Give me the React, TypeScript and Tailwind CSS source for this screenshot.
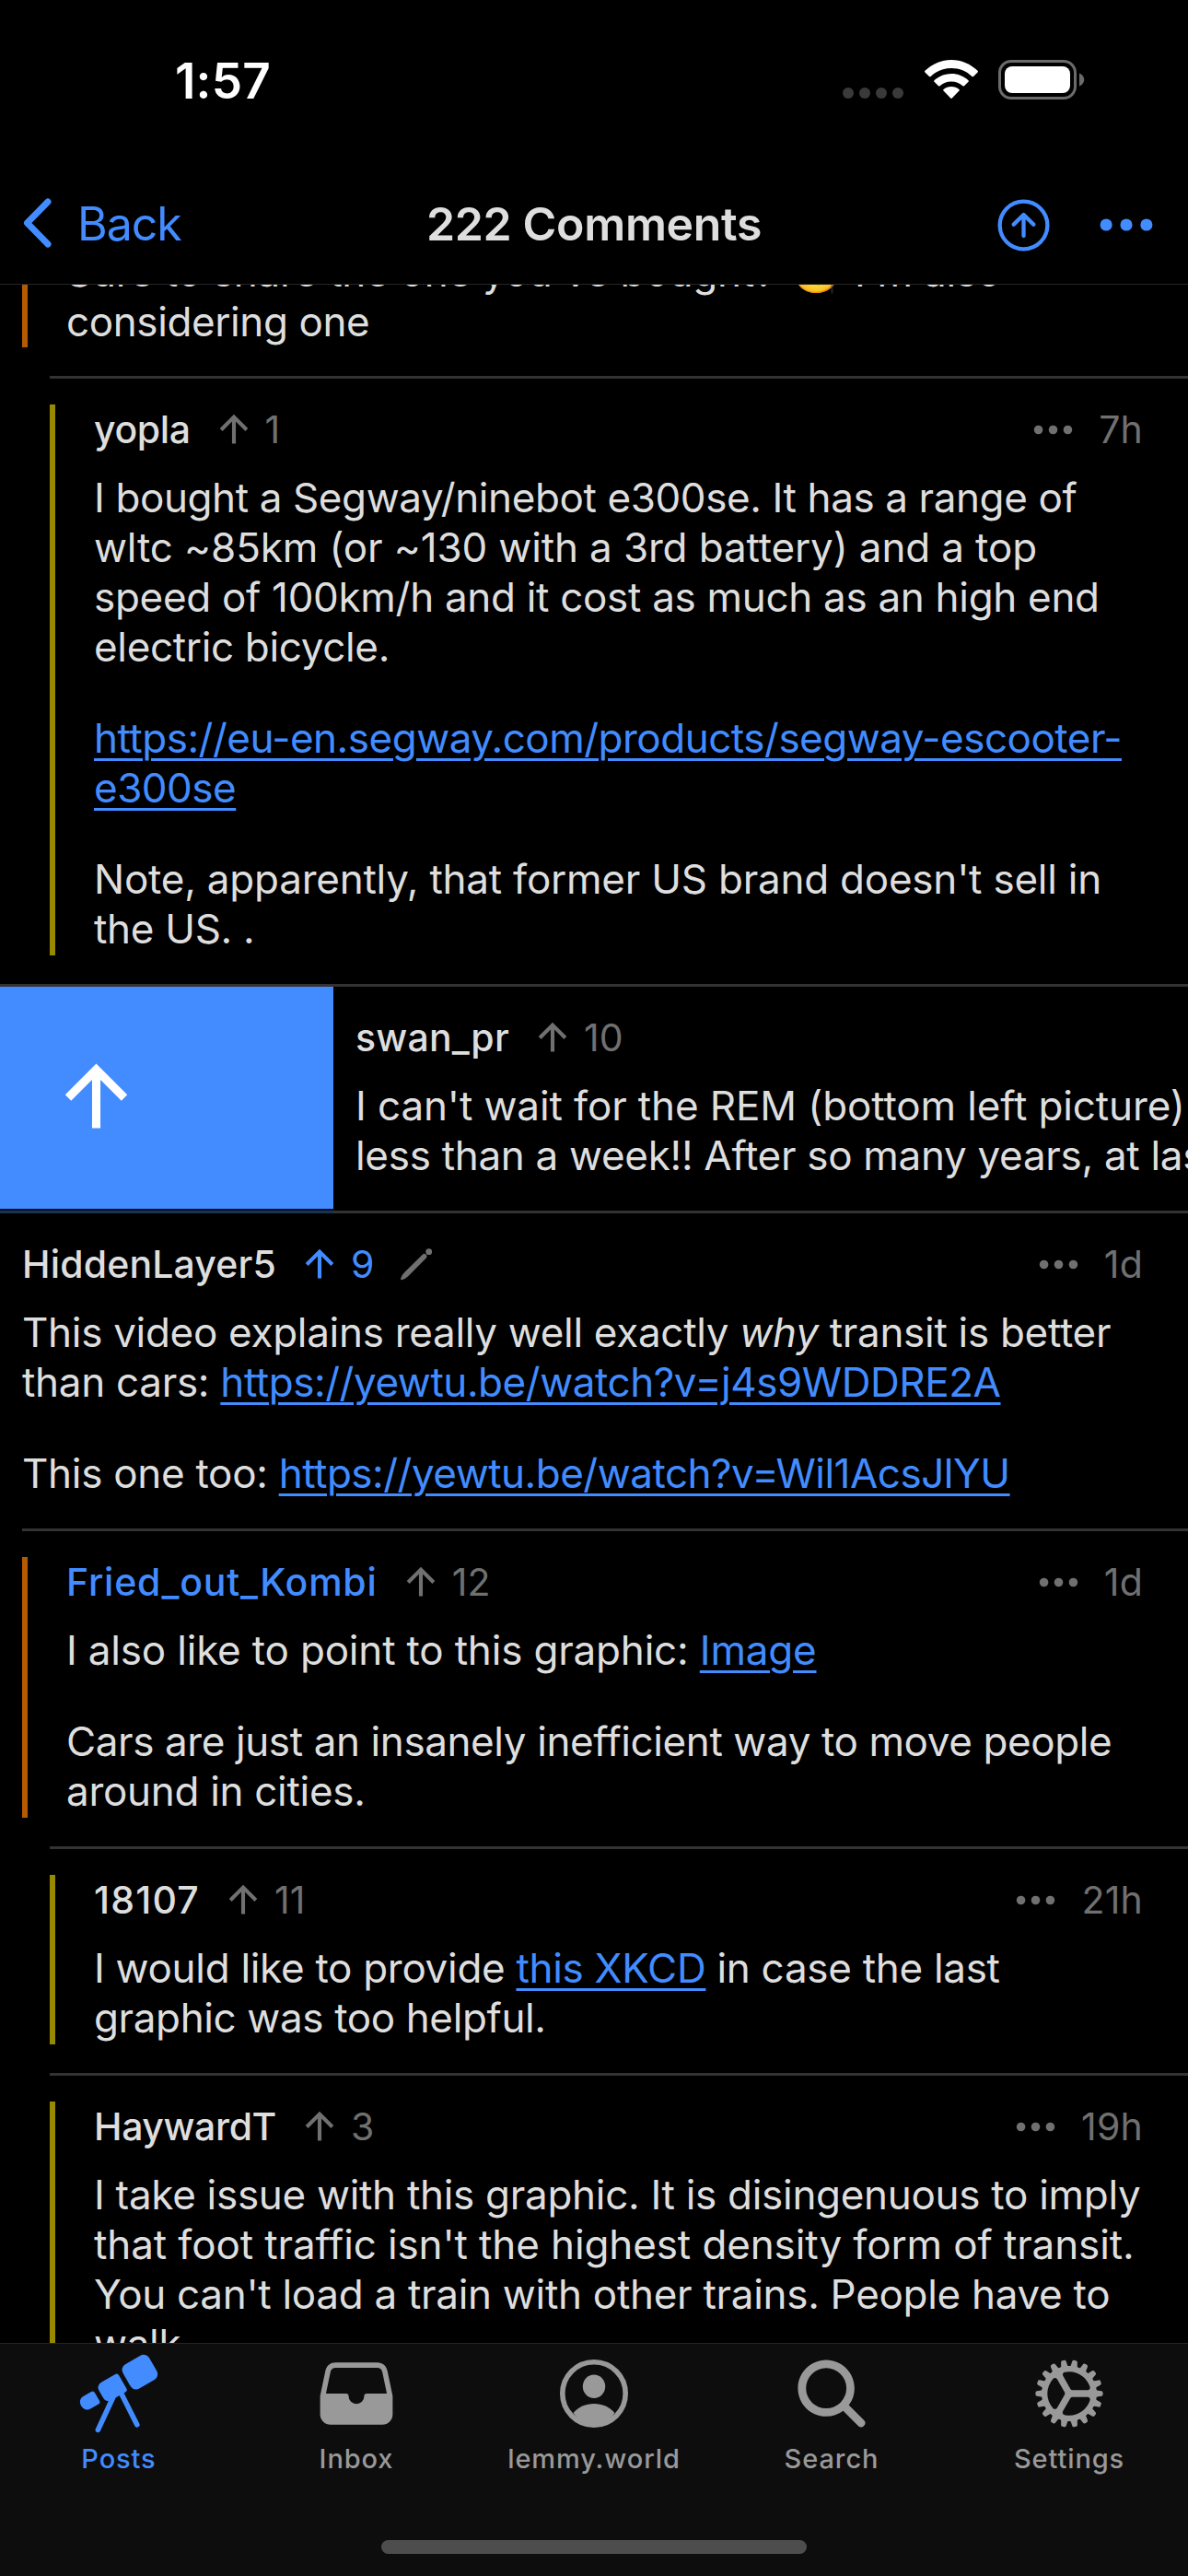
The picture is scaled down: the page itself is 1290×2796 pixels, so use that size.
import { ReactNode } from "react";
import {
  IoArrowUpCircleOutline,
  IoArrowUpSharp,
  IoCog,
  IoEllipsisHorizontal,
  IoFileTray,
  IoSearch,
  IoTelescope,
} from "react-icons/io5";

function StatusBar() {
  return (
    <div className="flex h-[174px] shrink-0 items-start justify-between pl-[190px] pr-[111px] pt-[60px] text-white">
      <div className="text-[53px] font-semibold leading-[56px] tracking-[0.2px]">1:57</div>
      <div className="flex items-start pt-[5px]">
        <div className="mr-[23px] flex gap-[6px] pt-[30px]">
          <i className="h-3 w-3 rounded-full bg-[#3a3a3a]" />
          <i className="h-3 w-3 rounded-full bg-[#3a3a3a]" />
          <i className="h-3 w-3 rounded-full bg-[#3a3a3a]" />
          <i className="h-3 w-3 rounded-full bg-[#3a3a3a]" />
        </div>
        <svg width="58" height="43" viewBox="0 0 58 43" fill="currentColor">
          <path d="M29 0C40 0 50 4.500 57.600 11.800Q58.300 12.600 57.600 13.400L53 18Q52.200 18.600 51.400 17.900C45.500 12.200 37.600 9 29 9S12.500 12.200 6.600 17.900Q5.800 18.600 5 18L.4 13.400Q-.3 12.600 .4 11.800C8 4.500 18 0 29 0Z" />
          <path d="M29 15C36.100 15 42.600 17.700 47.500 22.200Q48.300 23 47.500 23.800L43 28.200Q42.200 28.900 41.400 28.200C38.100 25.300 33.800 23.500 29 23.500S19.900 25.300 16.600 28.200Q15.800 28.900 15 28.200L10.500 23.800Q9.700 23 10.500 22.200C15.400 17.700 21.900 15 29 15Z" />
          <path d="M29 29C32.200 29 35.200 30.200 37.500 32.100Q38.200 32.800 37.500 33.600L29.800 41.500Q29 42.300 28.200 41.500L20.500 33.600Q19.800 32.800 20.500 32.100C22.800 30.200 25.800 29 29 29Z" />
        </svg>
        <svg className="ml-[22px]" width="95" height="43" viewBox="0 0 95 43">
          <rect x="1.500" y="1.500" width="82" height="40" rx="12.500" fill="none" stroke="#6b6b6b" strokeWidth="3" />
          <rect x="7" y="7" width="71" height="29" rx="8" fill="#fff" />
          <path d="M88 14.500C95 17.500 95 25.500 88 28.500Z" fill="#6b6b6b" />
        </svg>
      </div>
    </div>
  );
}

function NavBar() {
  return (
    <div className="grid h-[135px] shrink-0 grid-cols-[1fr_auto_1fr] items-center border-b border-[#262626] pl-[25px] pr-[32px] pt-[6px]">
      <div className="flex items-center text-[#428cff]">
        <svg className="-mt-[5px]" width="31" height="54" viewBox="0 0 31 54" fill="none" stroke="currentColor" strokeWidth="7" strokeLinecap="round" strokeLinejoin="round">
          <path d="M27 4 4.500 27 27 50" />
        </svg>
        <span className="-mt-[3px] ml-[28px] text-[50px] leading-[60px] tracking-[-1px]">Back</span>
      </div>
      <h1 className="-mt-[3px] ml-[7px] text-[50px] font-semibold leading-[60px] tracking-[-0.35px] text-[#dedede]">222 Comments</h1>
      <div className="flex items-center justify-end gap-[42px] text-[#428cff]">
        <IoArrowUpCircleOutline size={69} />
        <IoEllipsisHorizontal size={70} />
      </div>
    </div>
  );
}

function Link({ children, className = "" }: { children: ReactNode; className?: string }) {
  return (
    <a className={`text-[#428cff] underline decoration-[3px] underline-offset-[6px] ${className}`}>{children}</a>
  );
}

/* One line of body copy with its own letter spacing. */
function Line({ t, children }: { t: string; children: ReactNode }) {
  return <span className={`block ${t}`}>{children}</span>;
}

function PencilIcon() {
  return (
    <svg className="ml-[28px] text-[#707070]" width="35" height="35" viewBox="0 0 35 35" fill="currentColor">
      <circle cx="30.700" cy="3.700" r="3.400" />
      <path d="M24 6.600Q25.800 5 27.600 6.800T27.800 10.400L8.200 30.200Q5.500 33 1.200 34.200Q-.2 34.200 .2 32.600Q1.200 28.800 4.200 26Z" />
    </svg>
  );
}

type HeaderProps = {
  name: string;
  votes: string;
  age?: string;
  spacing?: string;
  known?: boolean;
  upvoted?: boolean;
  edited?: boolean;
};

function Header({ name, votes, age, spacing = "tracking-[-0.4px]", known, upvoted, edited }: HeaderProps) {
  return (
    <div className="flex h-[54px] items-center text-[41px]">
      <span className={`font-medium ${spacing} ${known ? "text-[#428cff]" : "text-[#dedede]"}`}>{name}</span>
      <span className={`ml-[25px] flex items-center gap-[12px] tracking-[0.2px] ${upvoted ? "text-[#428cff]" : "text-[#707070]"}`}>
        <IoArrowUpSharp size={44} />
        <span>{votes}</span>
      </span>
      {edited && <PencilIcon />}
      {age && (
        <span className="ml-auto flex items-center gap-[24px] tracking-[0.2px] text-[#707070]">
          <IoEllipsisHorizontal size={51} />
          <span>{age}</span>
        </span>
      )}
    </div>
  );
}

const bars = {
  0: "ml-[24px]",
  1: "ml-[24px] border-l-[6px] border-[#b55a00] pl-[42px]",
  2: "ml-[54px] border-l-[6px] border-[#988a00] pl-[42px]",
};

function Comment({ depth, header, children }: { depth: 0 | 1 | 2; header: ReactNode; children: ReactNode }) {
  return (
    <div className="min-w-0 flex-1 shrink-0 basis-auto pb-[31px] pt-[28px]">
      <div className={`${bars[depth]} pb-[2px] pr-[49px]`}>
        {header}
        <div className="flex flex-col gap-[45px] whitespace-nowrap pt-[20px]">{children}</div>
      </div>
    </div>
  );
}

function Rule({ inset }: { inset: string }) {
  return <div className={`h-[3px] shrink-0 bg-[#333333] ${inset}`} />;
}

function PersonIcon() {
  return (
    <svg width="90" height="90" viewBox="0 0 90 90" fill="currentColor">
      <circle cx="45" cy="45" r="34.200" fill="none" stroke="currentColor" strokeWidth="5.600" />
      <ellipse cx="45" cy="37.300" rx="12.200" ry="12.800" />
      <path d="M22.500 66C28 59.500 36 56 45 56S62 59.500 67.500 66C62 74 54 79.500 45 79.500S28 74 22.500 66Z" />
    </svg>
  );
}

function Tab({ icon, label, active }: { icon: ReactNode; label: string; active?: boolean }) {
  return (
    <div className={`flex flex-1 flex-col items-center ${active ? "text-[#428cff]" : "text-[#999999]"}`}>
      {icon}
      <span className="mt-[8px] text-[29px] font-medium leading-[36px] tracking-[0.9px]">{label}</span>
    </div>
  );
}

export default function App() {
  return (
    <div className="flex h-[2796px] w-[1290px] flex-col overflow-hidden bg-black font-['Inter',sans-serif]">
      <StatusBar />
      <NavBar />
      <main className="flex h-[2234px] shrink-0 flex-col overflow-hidden text-[44px] leading-[54px] tracking-[-0.45px] text-[#dedede]">
        <div className="mb-[31px] ml-[24px] flex h-[68px] shrink-0 flex-col justify-end border-l-[6px] border-[#b55a00] pb-px">
          <p className="whitespace-nowrap pl-[42px]">
            <Line t="tracking-[-0.25px]">
              Sure to share the one you've bought? <span className="ml-[6px] mr-[2px]">🧐</span> I'm also
            </Line>
            <Line t="tracking-[-0.4px]">considering one</Line>
          </p>
        </div>
        <Rule inset="ml-[54px]" />
        <Comment depth={2} header={<Header name="yopla" votes="1" age="7h" />}>
          <p>
            <Line t="tracking-[-0.4px]">I bought a Segway/ninebot e300se. It has a range of</Line>
            <Line t="tracking-[-0.14px]">wltc ~85km (or ~130 with a 3rd battery) and a top</Line>
            <Line t="tracking-[-0.31px]">speed of 100km/h and it cost as much as an high end</Line>
            <Line t="tracking-[-0.34px]">electric bicycle.</Line>
          </p>
          <p>
            <Link className="tracking-[-0.5px]">
              https://eu-en.segway.com/products/segway-escooter-
              <br />
              e300se
            </Link>
          </p>
          <p>
            <Line t="tracking-[-0.23px]">Note, apparently, that former US brand doesn't sell in</Line>
            <Line t="tracking-[-0.3px]">the US. .</Line>
          </p>
        </Comment>
        <Rule inset="" />
        <div className="flex shrink-0">
          <div className="flex h-[243px] w-[362px] shrink-0 flex-col border-b-2 border-[#050f22] bg-[#428cff] pl-[56px] pt-[71px] text-white">
            <IoArrowUpSharp size={97} />
          </div>
          <Comment depth={0} header={<Header name="swan_pr" votes="10" spacing="tracking-[0.2px]" />}>
            <p>
              <Line t="tracking-[-0.12px]">I can't wait for the REM (bottom left picture)</Line>
              <Line t="tracking-[-0.3px]">less than a week!! After so many years, at last</Line>
            </p>
          </Comment>
        </div>
        <div className="flex shrink-0">
          <div className="h-[3px] w-[362px] bg-[#1b3350]" />
          <div className="h-[3px] flex-1 bg-[#333333]" />
        </div>
        <Comment
          depth={0}
          header={<Header name="HiddenLayer5" votes="9" age="1d" spacing="tracking-[0.15px]" upvoted edited />}
        >
          <p>
            <Line t="tracking-[-0.3px]">
              This video explains really well exactly <em>why</em> transit is better
            </Line>
            <Line t="tracking-[-0.3px]">
              than cars: <Link className="tracking-[-0.45px]">https://yewtu.be/watch?v=j4s9WDDRE2A</Link>
            </Line>
          </p>
          <p>
            <Line t="tracking-[-0.3px]">
              This one too: <Link className="tracking-[-0.5px]">https://yewtu.be/watch?v=Wil1AcsJlYU</Link>
            </Line>
          </p>
        </Comment>
        <Rule inset="ml-[24px]" />
        <Comment
          depth={1}
          header={<Header name="Fried_out_Kombi" votes="12" age="1d" spacing="tracking-[0.8px]" known />}
        >
          <p>
            <Line t="tracking-[-0.19px]">
              I also like to point to this graphic: <Link>Image</Link>
            </Line>
          </p>
          <p>
            <Line t="tracking-[-0.4px]">Cars are just an insanely inefficient way to move people</Line>
            <Line t="tracking-[-0.3px]">around in cities.</Line>
          </p>
        </Comment>
        <Rule inset="ml-[54px]" />
        <Comment depth={2} header={<Header name="18107" votes="11" age="21h" spacing="tracking-[1.2px]" />}>
          <p>
            <Line t="tracking-[-0.3px]">
              I would like to provide <Link>this XKCD</Link> in case the last
            </Line>
            <Line t="tracking-[-0.38px]">graphic was too helpful.</Line>
          </p>
        </Comment>
        <Rule inset="ml-[54px]" />
        <Comment depth={2} header={<Header name="HaywardT" votes="3" age="19h" />}>
          <p>
            <Line t="tracking-[-0.3px]">I take issue with this graphic. It is disingenuous to imply</Line>
            <Line t="tracking-[-0.12px]">that foot traffic isn't the highest density form of transit.</Line>
            <Line t="tracking-[-0.3px]">You can't load a train with other trains. People have to</Line>
            <Line t="tracking-[-0.3px]">walk.</Line>
          </p>
        </Comment>
      </main>
      <footer className="flex flex-1 flex-col border-t border-[#262626] bg-[#0d0d0d] pt-[9px]">
        <div className="flex">
          <Tab active icon={<IoTelescope size={90} />} label="Posts" />
          <Tab icon={<IoFileTray size={90} />} label="Inbox" />
          <Tab icon={<PersonIcon />} label="lemmy.world" />
          <Tab icon={<IoSearch size={90} />} label="Search" />
          <Tab icon={<IoCog size={90} />} label="Settings" />
        </div>
        <div className="mx-auto mb-[24px] mt-auto h-[15px] w-[462px] rounded-full bg-[#4d4d4d]" />
      </footer>
    </div>
  );
}
